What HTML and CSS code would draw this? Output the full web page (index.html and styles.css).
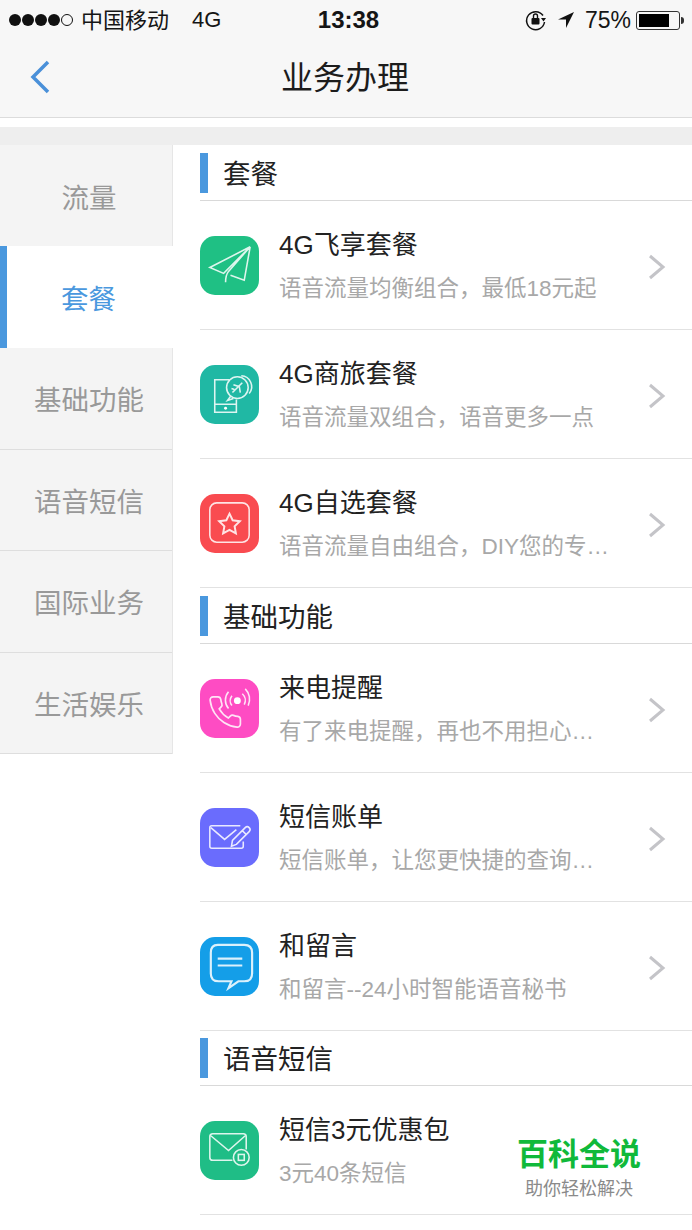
FILE: index.html
```html
<!DOCTYPE html>
<html lang="zh-CN">
<head>
    <meta charset="UTF-8">
    <meta name="viewport" content="width=device-width, initial-scale=1.0">
    <title>业务办理</title>
    <link rel="stylesheet" href="styles.css">
</head>
<body>
<div class="top">
    <div class="status">
        <div class="status-left">
            <span class="signal"><i></i><i></i><i></i><i></i><i class="off"></i></span>
            <span class="carrier">中国移动</span>
            <span class="net">4G</span>
        </div>
        <div class="clock">13:38</div>
        <div class="status-right">
            <svg class="lock" width="24" height="24" viewBox="0 0 24 24">
                <path d="M19 7.500A9 9 0 1 0 20.500 14" fill="none" stroke="#111" stroke-width="1.500"/>
                <path d="M17 10h5l-2.500 3.500z" fill="#111"/>
                <rect x="7.500" y="10" width="8" height="6.500" rx="1" fill="#111"/>
                <path d="M9.500 10V8a2 2 0 0 1 4 0v2" fill="none" stroke="#111" stroke-width="1.400"/>
            </svg>
            <svg class="arrow" width="18" height="18" viewBox="0 0 18 18"><path d="M17 1 1 8.500h8V17z" fill="#111"/></svg>
            <span class="pct">75%</span>
            <span class="batt"><span class="batt-fill"></span></span><span class="batt-tip"></span>
        </div>
    </div>
    <div class="nav">
        <svg class="back" width="24" height="36" viewBox="0 0 24 36"><path d="M19 3 4 18l15 15" fill="none" stroke="#4a90d9" stroke-width="3.500"/></svg>
        <h1>业务办理</h1>
    </div>
</div>
<div class="gap"></div>
<div class="band"></div>

<div class="main">
    <ul class="side">
        <li>流量</li>
        <li class="active">套餐</li>
        <li>基础功能</li>
        <li>语音短信</li>
        <li>国际业务</li>
        <li>生活娱乐</li>
    </ul>

    <div class="list">
        <div class="head"><span>套餐</span></div>

        <div class="row">
            <svg class="ico c-green" viewBox="0 0 60 60">
                <path d="M51 11 10 32l14 6zM51 11l-6 34-14-5M51 11 29 36q-3 4-3 11"/>
            </svg>
            <div class="txt"><h3>4G飞享套餐</h3><p>语音流量均衡组合，最低18元起</p></div>
            <svg class="more" width="18" height="26" viewBox="0 0 18 26"><path d="m2 2 13 11L2 24"/></svg>
        </div>
        <div class="row">
            <svg class="ico c-teal" viewBox="0 0 60 60">
                <path d="M30 15H15v33h22V35M15 40h22"/>
                <circle class="dot" cx="26" cy="44" r="1.500"/>
                <circle cx="38" cy="23" r="11"/>
                <path d="M42 11a11 11 0 0 1 8 18M31 32l-3 4 6-2"/>
                <path d="m43 18-10 10M34 20l6 2 1 6M32 24l3 1"/>
            </svg>
            <div class="txt"><h3>4G商旅套餐</h3><p>语音流量双组合，语音更多一点</p></div>
            <svg class="more" width="18" height="26" viewBox="0 0 18 26"><path d="m2 2 13 11L2 24"/></svg>
        </div>
        <div class="row">
            <svg class="ico c-red" viewBox="0 0 60 60">
                <rect x="10" y="9" width="40" height="40" rx="7"/>
                <path d="m30 20 3.200 6.700 7.300 1-5.300 5.100 1.300 7.200-6.500-3.500-6.500 3.500 1.300-7.200-5.300-5.100 7.300-1z" stroke-width="2"/>
            </svg>
            <div class="txt"><h3>4G自选套餐</h3><p>语音流量自由组合，DIY您的专…</p></div>
            <svg class="more" width="18" height="26" viewBox="0 0 18 26"><path d="m2 2 13 11L2 24"/></svg>
        </div>

        <div class="head"><span>基础功能</span></div>

        <div class="row">
            <svg class="ico c-pink" viewBox="0 0 60 60">
                <path transform="translate(7 15) scale(1.550)" stroke-width="1.100" d="M22 16.920v3a2 2 0 0 1-2.180 2 19.790 19.790 0 0 1-8.630-3.070 19.500 19.500 0 0 1-6-6 19.790 19.790 0 0 1-3.070-8.670A2 2 0 0 1 4.110 2h3a2 2 0 0 1 2 1.720 12.840 12.840 0 0 0 .7 2.810 2 2 0 0 1-.45 2.110L8.090 9.910a16 16 0 0 0 6 6l1.270-1.270a2 2 0 0 1 2.110-.45 12.840 12.840 0 0 0 2.810.7A2 2 0 0 1 22 16.920z"/>
                <circle class="dot" cx="38" cy="22" r="3.500"/>
                <path d="M32.500 17a8 8 0 0 0 0 10M29 13a13 13 0 0 0 0 17M43 15a9 9 0 0 1 2 11M46 10a15 15 0 0 1 3 17"/>
            </svg>
            <div class="txt"><h3>来电提醒</h3><p>有了来电提醒，再也不用担心…</p></div>
            <svg class="more" width="18" height="26" viewBox="0 0 18 26"><path d="m2 2 13 11L2 24"/></svg>
        </div>
        <div class="row">
            <svg class="ico c-purple" viewBox="0 0 60 60">
                <path d="M41 18H12q-2 0-2 2v19q0 2 2 2h30q2 0 2-2v-5"/>
                <path d="m11 20 14 12 12-10"/>
                <path d="m37 37-5 2 1-6 13-13q2-2 4 0t0 4zM43 23l4 4"/>
            </svg>
            <div class="txt"><h3>短信账单</h3><p>短信账单，让您更快捷的查询…</p></div>
            <svg class="more" width="18" height="26" viewBox="0 0 18 26"><path d="m2 2 13 11L2 24"/></svg>
        </div>
        <div class="row">
            <svg class="ico c-blue" viewBox="0 0 60 60">
                <path class="thick" d="M18 8h27q8 0 8 8v21q0 8-8 8h-6l-10 7 3-7H19q-8 0-8-8V16q0-8 7-8z"/>
                <path class="thick" d="M18 22h25M18 29h25"/>
            </svg>
            <div class="txt"><h3>和留言</h3><p>和留言--24小时智能语音秘书</p></div>
            <svg class="more" width="18" height="26" viewBox="0 0 18 26"><path d="m2 2 13 11L2 24"/></svg>
        </div>

        <div class="head short"><span>语音短信</span></div>

        <div class="row">
            <svg class="ico c-mint" viewBox="0 0 60 60">
                <path d="M33 40H13q-3 0-3-3V16q0-3 3-3h31q3 0 3 3v13"/>
                <path d="m11 15 18 15 17-15"/>
                <circle cx="42" cy="37" r="8"/>
                <rect x="39" y="34" width="6" height="6"/>
            </svg>
            <div class="txt"><h3>短信3元优惠包</h3><p>3元40条短信</p></div>
        </div>
    </div>
</div>

<div class="mark">
    <div class="mark-big">百科全说</div>
    <div class="mark-small">助你轻松解决</div>
</div>
</body>
</html>
```

FILE: styles.css
```css
* {
    box-sizing: border-box;
}
body {
    margin: 0;
    height: 1230px;
    overflow: hidden;
    position: relative;
    background: #fff;
    font-family: "Liberation Sans", "Noto Sans CJK SC", sans-serif;
}
ul, h1, h3, p {
    margin: 0;
    padding: 0;
    font-weight: 400;
}

/* status + nav */
.top {
    height: 118px;
    background: #f7f7f7;
    border-bottom: 1px solid #dcdcdc;
}
.status {
    height: 40px;
    display: grid;
    grid-template-columns: 1fr auto 1fr;
    align-items: center;
    color: #151515;
    font-size: 22px;
    padding: 0 8px 0 9px;
}
.status-left {
    display: flex;
    align-items: center;
}
.carrier {
    margin-top: -5px;
}
.net {
    margin-left: 23px;
}
.signal {
    display: flex;
    gap: 1px;
    margin-right: 8px;
}
.signal i {
    width: 12px;
    height: 12px;
    border-radius: 50%;
    background: #111;
}
.signal i.off {
    background: none;
    border: 1px solid #111;
}
.clock {
    font-size: 24px;
    font-weight: 700;
    padding-left: 4px;
}
.status-right {
    display: flex;
    align-items: center;
    justify-content: flex-end;
}
.lock {
    margin-right: 9px;
}
.arrow {
    margin-right: 10px;
}
.pct {
    font-size: 23px;
    margin-right: 5px;
}
.batt {
    width: 44px;
    height: 19px;
    border: 1px solid #333;
    border-radius: 3px;
    padding: 2px;
    display: block;
}
.batt-fill {
    display: block;
    width: 30px;
    height: 100%;
    background: #000;
}
.batt-tip {
    width: 3px;
    height: 7px;
    background: #333;
    border-radius: 0 3px 3px 0;
    margin-left: 1px;
}
.nav {
    height: 77px;
    display: flex;
    align-items: center;
    justify-content: center;
    position: relative;
}
.nav h1 {
    font-size: 32px;
    color: #1c1c1c;
    margin: -8px 2px 0 0;
}
.back {
    position: absolute;
    left: 29px;
    top: 19px;
}
.gap {
    height: 9px;
}
.band {
    height: 18px;
    background: #eeeeee;
}

.main {
    display: flex;
    align-items: flex-start;
}

/* left menu */
.side {
    list-style: none;
    width: 173px;
    flex: none;
    background: #f4f4f4;
    border-right: 1px solid #e6e6e6;
}
.side li {
    height: 101.500px;
    display: flex;
    align-items: center;
    justify-content: center;
    font-size: 27.500px;
    color: #999;
    border-bottom: 1px solid #dedede;
    padding-left: 6px;
}
.side li:first-child {
    height: 101px;
    border-bottom: none;
}
.side li.active {
    height: 102px;
    background: #fff;
    color: #4a98de;
    border-bottom: none;
    border-left: 7px solid #4a98de;
    margin-right: -1px;
    padding: 0 3px 0 0;
}

/* right list */
.list {
    flex: 1;
    margin-left: 27px;
}
.head {
    height: 56px;
    display: flex;
    align-items: center;
    border-bottom: 1px solid #d9d9d9;
    font-size: 27.500px;
    color: #222;
}
.head.short {
    height: 55px;
}
.head span {
    border-left: 8px solid #4a98de;
    height: 40px;
    line-height: 44px;
    padding-left: 15px;
}
.row {
    height: 129px;
    display: flex;
    align-items: center;
    border-bottom: 1px solid #e2e2e2;
    position: relative;
}
.ico {
    width: 59px;
    height: 59px;
    flex: none;
    border-radius: 15px;
    fill: none;
    stroke: #fff;
    stroke-opacity: .85;
    stroke-width: 1.600;
    margin: 1px 20px 0 0;
}
.ico .dot {
    fill: #fff;
    stroke: none;
}
.ico .thick {
    stroke-width: 2.200;
}
.c-green { background: #1fc084; }
.c-teal { background: #20b8a4; }
.c-red { background: #f94b50; }
.c-pink { background: #fe4cc3; }
.c-purple { background: #6a6cfd; }
.c-blue { background: #149ee8; }
.c-mint { background: #1fbd86; }

.txt {
    width: 329px;
    padding-top: 2px;
    white-space: nowrap;
}
.txt h3 {
    font-size: 26px;
    line-height: 36px;
    color: #222;
}
.txt p {
    font-size: 22.500px;
    line-height: 32px;
    color: #a8a8a8;
    margin-top: 10px;
}
.more {
    position: absolute;
    left: 448px;
    top: 53px;
    fill: none;
    stroke: #c4c4c8;
    stroke-width: 3;
}

/* watermark sits over the list */
.mark {
    position: absolute;
    left: 505px;
    top: 1134px;
    width: 148px;
    text-align: center;
    background: rgba(255, 255, 255, .8);
}
.mark-big {
    font-size: 31px;
    line-height: 42px;
    font-weight: 700;
    color: #10b93a;
}
.mark-small {
    font-size: 18px;
    line-height: 26px;
    color: #8a8a8a;
}
```
